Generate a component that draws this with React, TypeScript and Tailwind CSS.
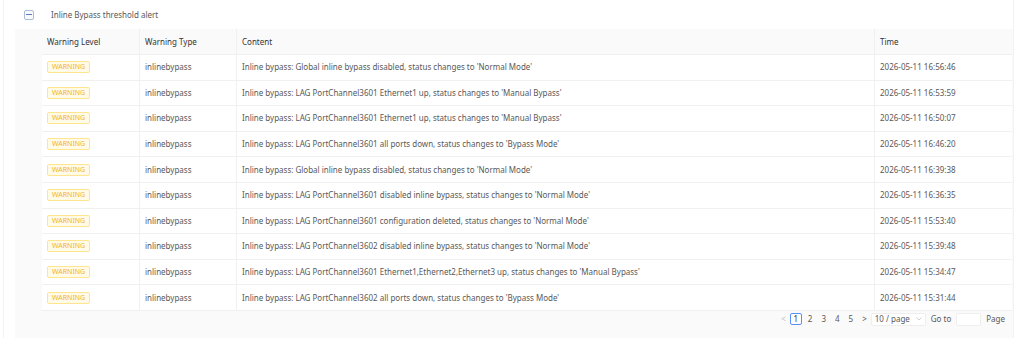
import React from 'react';

const rows = [
  { content: "Inline bypass: Global inline bypass disabled, status changes to 'Normal Mode'", time: '2026-05-11 16:56:46' },
  { content: "Inline bypass: LAG PortChannel3601 Ethernet1 up, status changes to 'Manual Bypass'", time: '2026-05-11 16:53:59' },
  { content: "Inline bypass: LAG PortChannel3601 Ethernet1 up, status changes to 'Manual Bypass'", time: '2026-05-11 16:50:07' },
  { content: "Inline bypass: LAG PortChannel3601 all ports down, status changes to 'Bypass Mode'", time: '2026-05-11 16:46:20' },
  { content: "Inline bypass: Global inline bypass disabled, status changes to 'Normal Mode'", time: '2026-05-11 16:39:38' },
  { content: "Inline bypass: LAG PortChannel3601 disabled inline bypass, status changes to 'Normal Mode'", time: '2026-05-11 16:36:35' },
  { content: "Inline bypass: LAG PortChannel3601 configuration deleted, status changes to 'Normal Mode'", time: '2026-05-11 15:53:40' },
  { content: "Inline bypass: LAG PortChannel3602 disabled inline bypass, status changes to 'Normal Mode'", time: '2026-05-11 15:39:48' },
  { content: "Inline bypass: LAG PortChannel3601 Ethernet1,Ethernet2,Ethernet3 up, status changes to 'Manual Bypass'", time: '2026-05-11 15:34:47' },
  { content: "Inline bypass: LAG PortChannel3602 all ports down, status changes to 'Bypass Mode'", time: '2026-05-11 15:31:44' },
];

const cell = 'flex h-full items-center border-r border-[#f0f0f0] px-[5px] whitespace-nowrap';

const App = () => {
  return (
    <div className="h-[338px] w-[1024px] overflow-hidden bg-white font-['Noto_Sans',sans-serif] text-[8px] text-[#595959]">
      <div className="ml-[3px] h-full w-[1011px] border-l border-r border-[#f2f2f2]">
        <div className="flex h-[29px] items-center">
          <span className="ml-[20px] flex h-[10px] w-[10px] items-center justify-center rounded-[2px] border border-[#a9bcd8] bg-[#f7f9fc]">
            <span className="h-px w-[6px] bg-[#5b7cb0]"></span>
          </span>
          <span className="ml-[17px] text-[#595959]">Inline Bypass threshold alert</span>
        </div>

        <div className="ml-[11px] h-[309px] bg-[#fafafa] pl-[27px]">
          <div className="w-[970px] bg-white">
            <div className="grid h-[26px] grid-cols-[98px_97px_638px_137px] items-center border-b border-[#f0f0f0] bg-[#fafafa] text-[#333]">
              <div className={cell}>Warning Level</div>
              <div className={cell}>Warning Type</div>
              <div className={cell}>Content</div>
              <div className="px-[5px]">Time</div>
            </div>
            {rows.map((row, i) => (
              <div
                key={i}
                className="grid h-[25.6px] grid-cols-[98px_97px_638px_137px] items-center border-b border-[#f0f0f0]"
              >
                <div className={cell}>
                  <span className="rounded-[2px] border border-[#ffe58f] bg-[#fffbe6] px-[4px] text-[7px] leading-[10px] text-[#f5b22d]">
                    WARNING
                  </span>
                </div>
                <div className={cell}>inlinebypass</div>
                <div className={cell}>{row.content}</div>
                <div className="px-[5px]">{row.time}</div>
              </div>
            ))}
          </div>

          <div className="flex h-[16px] w-[970px] items-center justify-end pr-[7px] pt-px text-[8px] text-[#595959]">
            <span className="mr-[4px] text-[#bfbfbf]">&lt;</span>
            <span className="mr-[6px] flex h-[12px] w-[12px] items-center justify-center rounded-[2px] border border-[#5b8ff9] bg-white text-[#333]">1</span>
            <span className="mr-[9px]">2</span>
            <span className="mr-[9px]">3</span>
            <span className="mr-[9px]">4</span>
            <span className="mr-[9px]">5</span>
            <span className="mr-[4px]">&gt;</span>
            <span className="mr-[5px] flex h-[13px] w-[55px] items-center justify-between rounded-[2px] border border-[#eeeeee] bg-white px-[3px]">
              10 / page
              <svg width="6" height="4" viewBox="0 0 6 4" fill="none">
                <path d="M0.5 0.5L3 3L5.5 0.5" stroke="#c4c4c4" strokeWidth="0.8" />
              </svg>
            </span>
            <span className="mr-[5px]">Go to</span>
            <span className="mr-[5px] h-[13px] w-[25px] rounded-[2px] border border-[#eeeeee] bg-white"></span>
            <span>Page</span>
          </div>
        </div>
      </div>
    </div>
  );
};

export default App;
